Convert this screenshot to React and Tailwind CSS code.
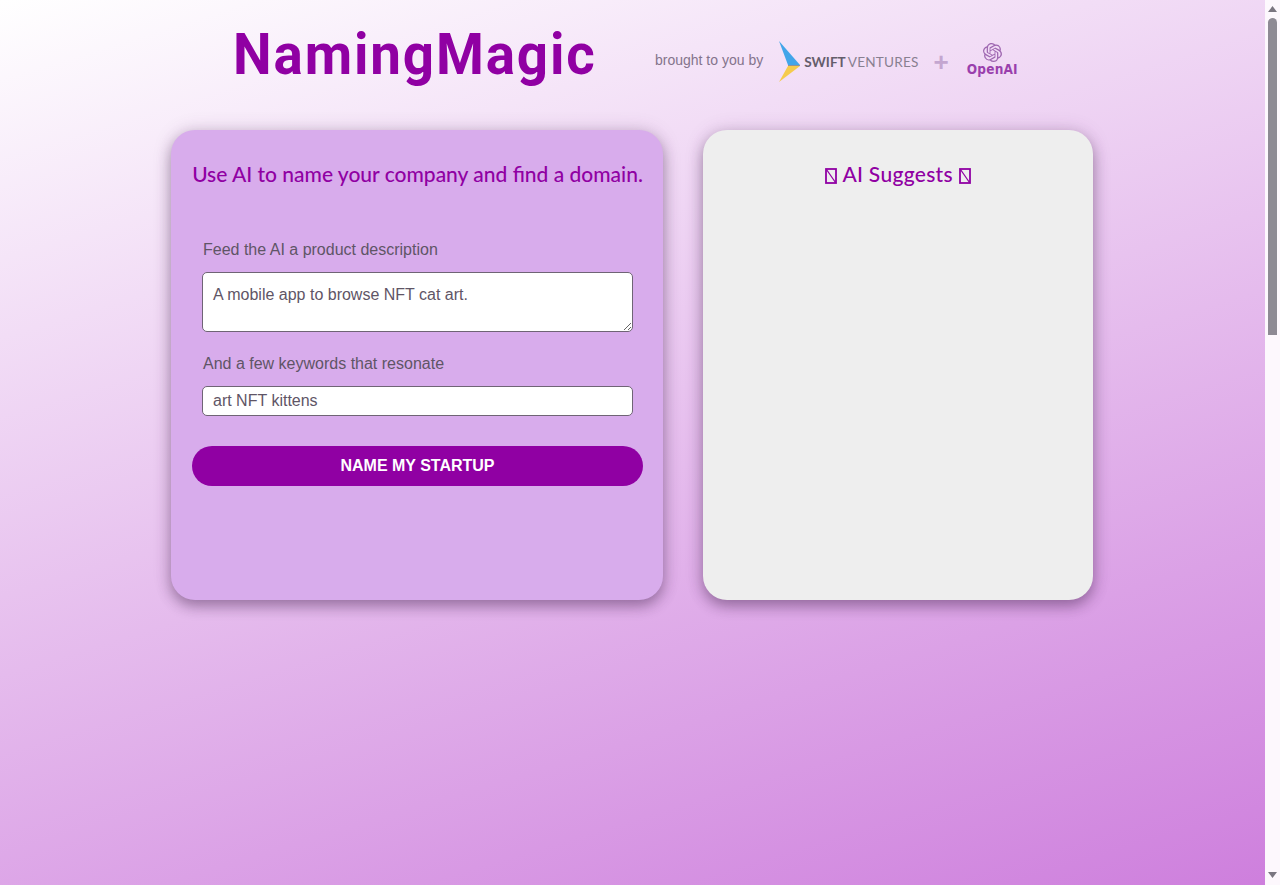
import { SiOpenai } from "react-icons/si";

function SwiftLogo() {
  return (
    <div className="flex items-center">
      <svg width="22" height="42" viewBox="0 0 22 42" className="opacity-90">
        <path d="M0 0 L21 24 L9 24 Z" fill="#2f9fe8" />
        <path d="M9 24 L21 24 L21 25 L9 25 Z" fill="#8a8a8a" />
        <path d="M9 25 L21 25 L0 41 Z" fill="#f6c93a" />
      </svg>
      <span className="ml-[3px] mt-[1px] text-[13.6px] leading-none text-[#55505c] opacity-90 font-['Lato',sans-serif]">
        <span className="font-bold">SWIFT</span>
        <span className="ml-[2px] tracking-[0.2px] text-[#7d7686]">VENTURES</span>
      </span>
    </div>
  );
}

function OpenAiLogo() {
  return (
    <div className="flex flex-col items-center">
      <SiOpenai className="h-[19px] w-[19px] text-[#8a4aa0] opacity-80" />
      <span className="text-[14px] leading-[15px] font-bold tracking-[0.2px] text-[#85189c] opacity-80 font-['DejaVu_Sans',sans-serif] scale-x-[0.87]">
        OpenAI
      </span>
    </div>
  );
}

// the emoji has no glyph in the reference, so it shows as a missing-glyph box
function Tofu() {
  return (
    <svg width="12" height="16" viewBox="0 0 12 16" className="inline-block align-[-2px]">
      <rect x="1" y="1" width="10" height="14" fill="none" stroke="#9000a3" strokeWidth="1.8" />
      <path d="M1.5 1.5 L10.5 14.5" stroke="#9000a3" strokeWidth="1.3" />
    </svg>
  );
}

function Field({ label, children }) {
  return (
    <div className="px-[10px]">
      <label className="block pl-[1px] text-base leading-[18px] text-[#5f5566]">{label}</label>
      {children}
    </div>
  );
}

function Scrollbar() {
  return (
    <aside className="flex w-[15px] shrink-0 flex-col items-center bg-[#fdf8fd]">
      <svg width="9" height="6" viewBox="0 0 9 6" className="mt-[6px]">
        <path d="M4.5 0 L9 6 L0 6 Z" fill="#7a7680" />
      </svg>
      <div className="mt-[6px] h-[317px] w-[9px] rounded-t-full rounded-b-[3px] bg-[#8e8a94]" />
      <svg width="9" height="6" viewBox="0 0 9 6" className="mt-auto mb-[7px]">
        <path d="M0 0 L9 0 L4.5 6 Z" fill="#7a7680" />
      </svg>
    </aside>
  );
}

export default function App() {
  return (
    <div className="flex h-screen overflow-hidden font-['Liberation_Sans',sans-serif]">
      <div className="flex-1 bg-[linear-gradient(163deg,#ffffff_0%,#ce7fdd_100%)]">
        <header className="flex h-[130px] items-start">
          <h1 className="ml-[233px] mt-[18px] w-[362px] origin-left scale-x-[0.943] text-[58px] leading-[72px] font-bold tracking-[2px] whitespace-nowrap text-[#9000a3] font-['Roboto',sans-serif]">
            NamingMagic
          </h1>
          <div className="ml-[60px] mt-[42px] flex items-start">
            <span className="mt-[10px] text-sm leading-4 text-[#84748c]">brought to you by</span>
            <div className="ml-[16px] -mt-[1px]">
              <SwiftLogo />
            </div>
            <span className="ml-[15px] mt-[9px] text-[26px] leading-[22px] font-bold text-[#c4a6d0]">+</span>
            <div className="ml-[14px] mt-[1px]">
              <OpenAiLogo />
            </div>
          </div>
        </header>

        <main className="flex justify-center gap-10 pr-px">
          <section className="h-[470px] w-[492px] rounded-3xl bg-[#d8acec] pt-[31px] pr-[20px] pl-[21px] shadow-[0_6px_14px_rgba(60,30,70,0.42),0_0_20px_rgba(90,40,100,0.14)]">
            <h2 className="text-center text-[21px] leading-[26px] font-medium whitespace-nowrap text-[#9000a3] font-['Lato',sans-serif]">
              Use AI to name your company and find a domain.
            </h2>
            <div className="mt-[54px]">
              <Field label="Feed the AI a product description">
                <textarea
                  defaultValue="A mobile app to browse NFT cat art."
                  className="mt-[13px] block h-[60px] w-full rounded-[5px] border border-[#6f6475] bg-white px-[10px] pt-[13px] text-base leading-[18px] text-[#5f5566]"
                />
              </Field>
            </div>
            <div className="mt-[23px]">
              <Field label="And a few keywords that resonate">
                <input
                  defaultValue="art NFT kittens"
                  className="mt-[13px] block h-[30px] w-full rounded-[5px] border border-[#6f6475] bg-white px-[10px] text-base text-[#5f5566]"
                />
              </Field>
            </div>
            <button className="mt-[30px] h-10 w-full rounded-[20px] bg-[#9000a3] text-base font-bold text-white">
              NAME MY STARTUP
            </button>
          </section>

          <section className="h-[470px] w-[390px] rounded-3xl bg-[#eeeeee] pt-[31px] shadow-[0_6px_14px_rgba(60,30,70,0.42),0_0_20px_rgba(90,40,100,0.14)]">
            <h2 className="text-center text-[21px] leading-[26px] font-medium tracking-[0.3px] text-[#9000a3] font-['Lato',sans-serif]">
              <Tofu /> AI Suggests <Tofu />
            </h2>
          </section>
        </main>
      </div>
      <Scrollbar />
    </div>
  );
}
